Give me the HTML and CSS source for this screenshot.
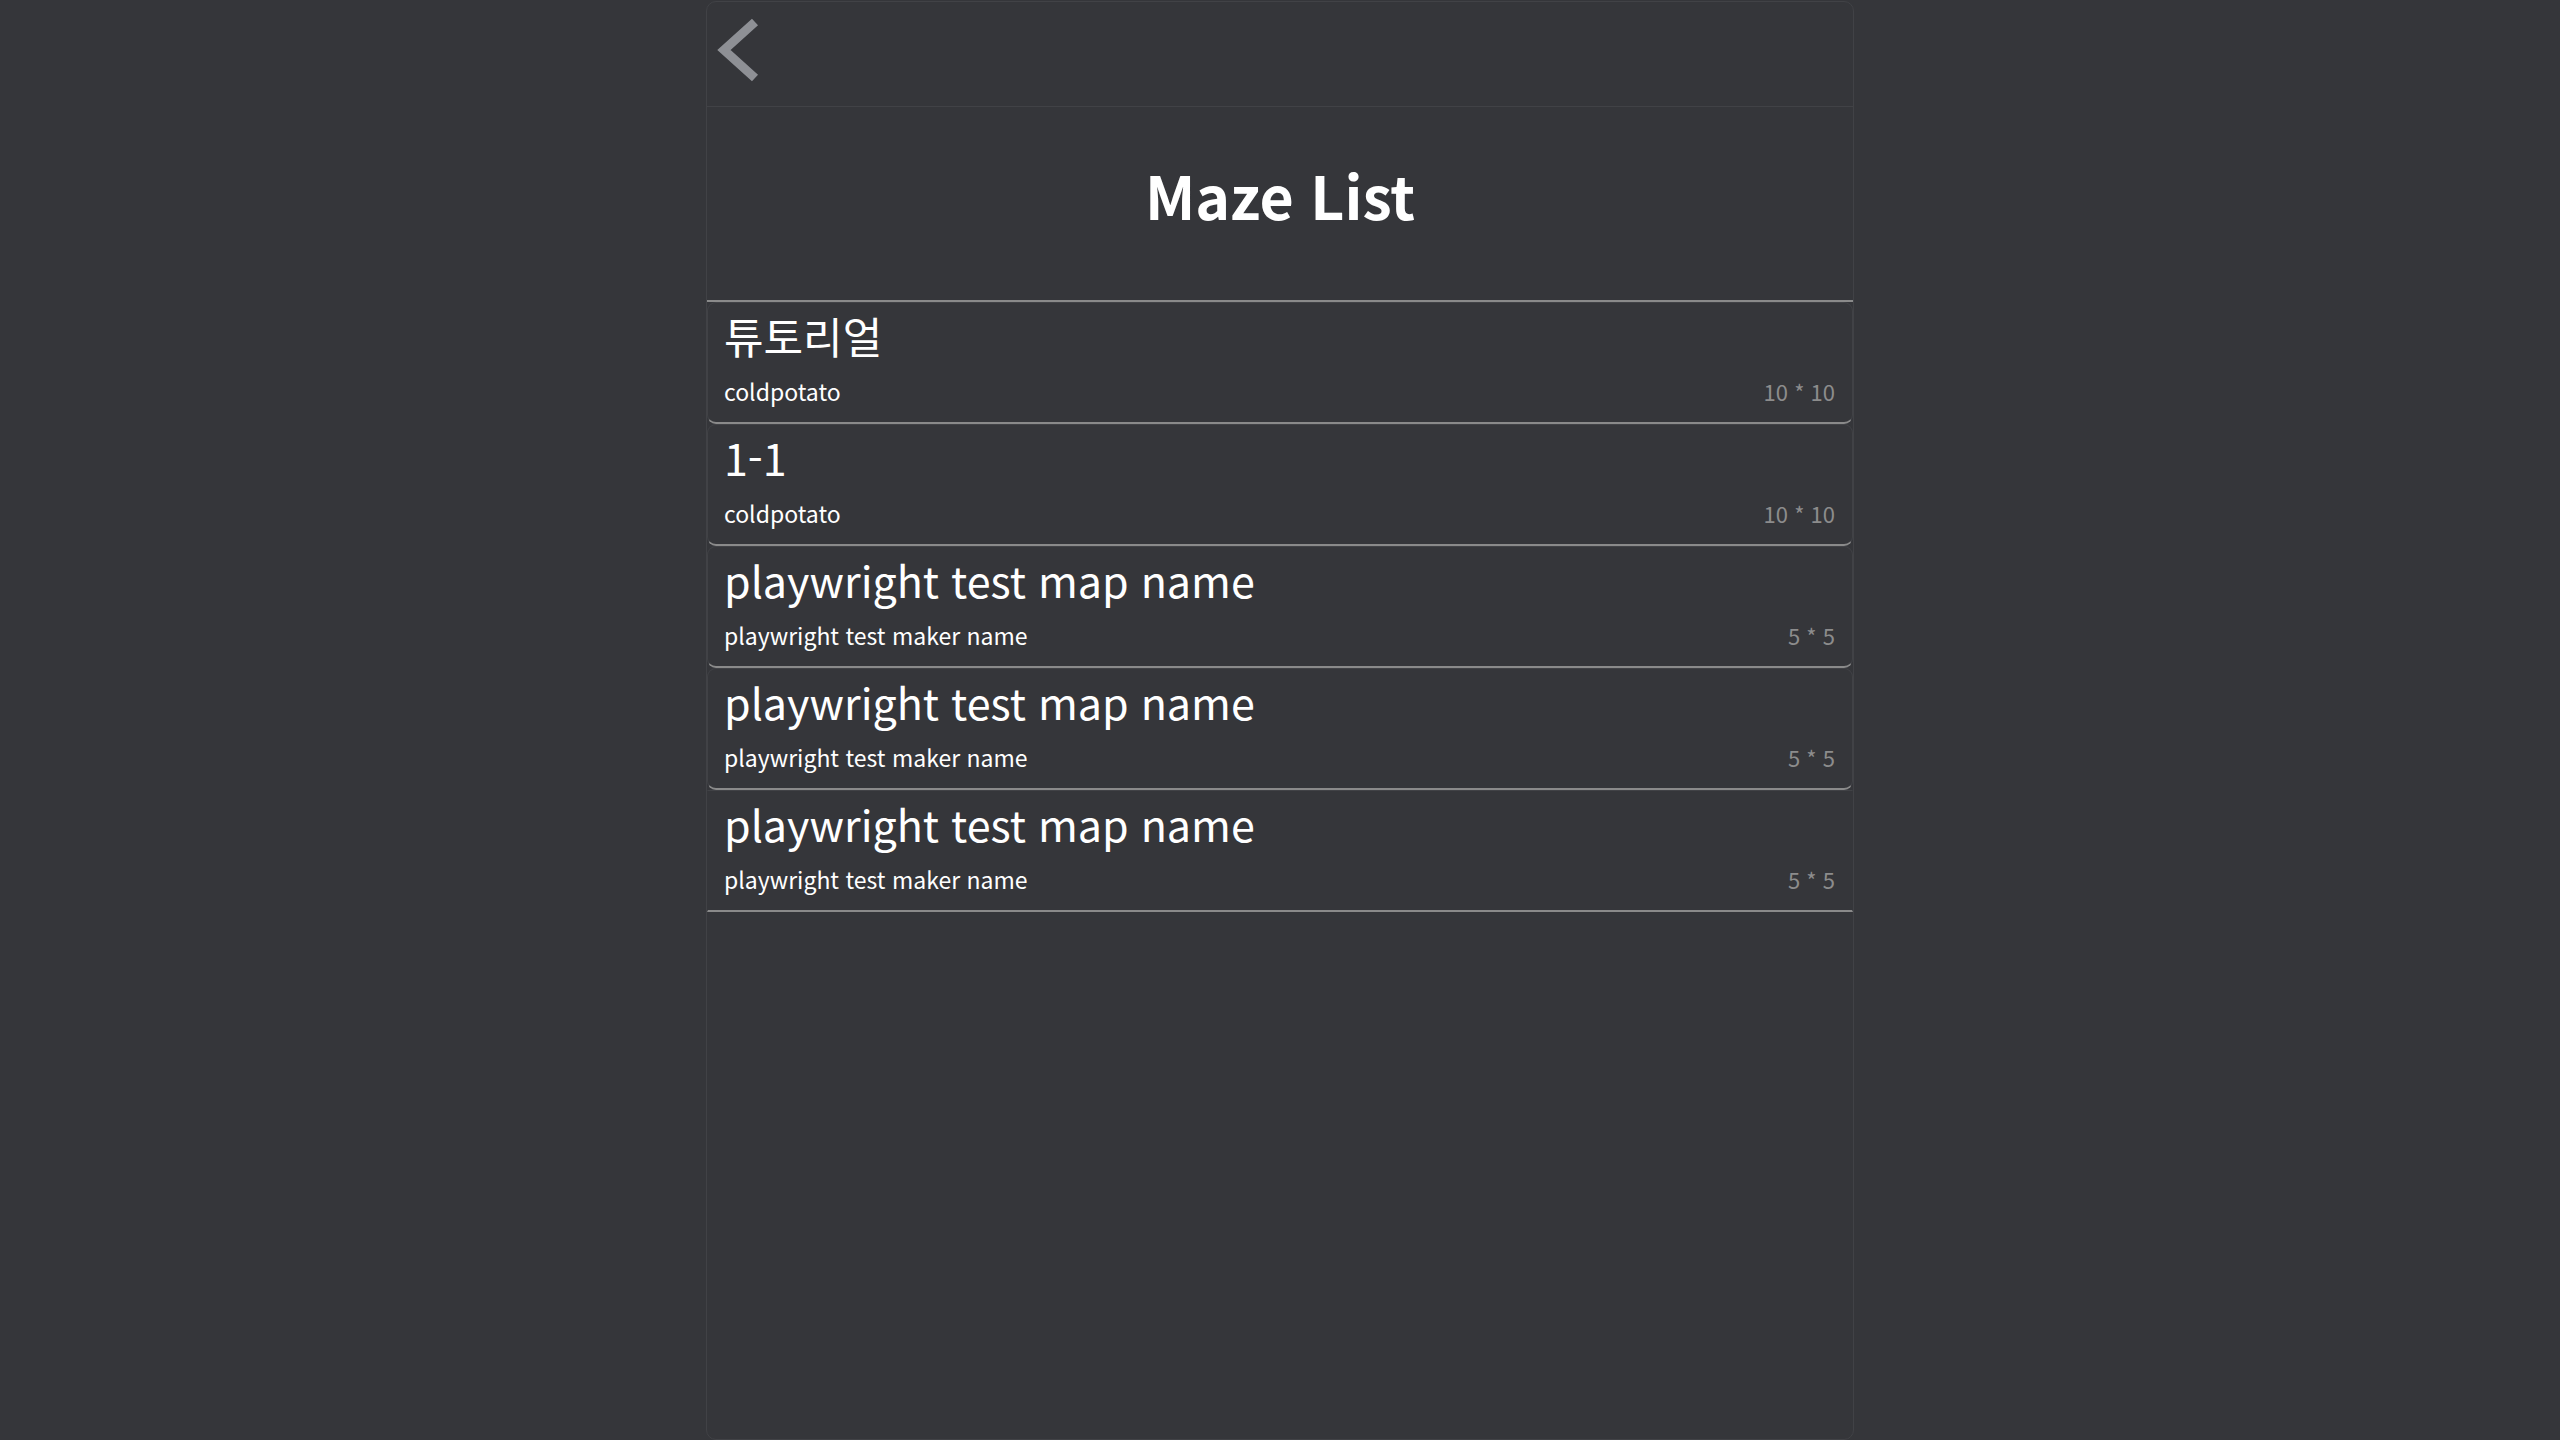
FILE: index.html
```html
<!DOCTYPE html>
<html lang="ko">
<head>
<meta charset="utf-8">
<title>Maze List</title>
<link rel="stylesheet" href="styles.css">
</head>
<body>
<div class="app">
  <header class="topbar">
    <button class="back" aria-label="back">
      <svg width="44" height="66" viewBox="0 0 44 66"><polyline points="39,6 8,34 39,62" fill="none" stroke="#8e9095" stroke-width="9" stroke-linejoin="miter" stroke-linecap="butt"/></svg>
    </button>
  </header>
  <section class="title-wrap">
    <h1 class="title">Maze List</h1>
  </section>
  <ul class="list">
    <li class="item">
      <div class="name">튜토리얼</div>
      <div class="meta"><span class="maker">coldpotato</span><span class="size">10 * 10</span></div>
    </li>
    <li class="item">
      <div class="name">1-1</div>
      <div class="meta"><span class="maker">coldpotato</span><span class="size">10 * 10</span></div>
    </li>
    <li class="item">
      <div class="name">playwright test map name</div>
      <div class="meta"><span class="maker">playwright test maker name</span><span class="size">5 * 5</span></div>
    </li>
    <li class="item">
      <div class="name">playwright test map name</div>
      <div class="meta"><span class="maker">playwright test maker name</span><span class="size">5 * 5</span></div>
    </li>
    <li class="item">
      <div class="name">playwright test map name</div>
      <div class="meta"><span class="maker">playwright test maker name</span><span class="size">5 * 5</span></div>
    </li>
  </ul>
</div>
</body>
</html>
```
FILE: styles.css
```css
html, body {
  margin: 0;
  padding: 0;
  background: #35363a;
  height: 100%;
}
body {
  font-family: "Noto Sans CJK KR", "Noto Sans", sans-serif;
  color: #ffffff;
  padding-top: 1px;
  box-sizing: border-box;
}
.app {
  width: 1148px;
  margin: 0 auto;
  box-sizing: border-box;
  min-height: calc(100vh - 1px);
  border: 1px solid #414246;
  border-radius: 10px;
  background: #35363a;
}
.topbar {
  border-bottom: 1px solid #414246;
  display: flex;
  align-items: flex-start;
  padding: 14px 0 0 9px;
  height: 90px;
}
.back {
  background: none;
  border: none;
  padding: 0;
  margin: 0;
  display: block;
  cursor: pointer;
}
.back svg { display: block; }
.title-wrap {
  border-bottom: 2px solid #8a8a8a;
  padding: 58px 0 76px;
  text-align: center;
}
.title {
  margin: 0;
  font-size: 59px;
  line-height: 59px;
  font-weight: 700;
}
.list {
  list-style: none;
  margin: 0;
  padding: 0;
}
.item {
  border: 1px solid #414246;
  border-bottom: 2px solid #8a8a8a;
  border-radius: 9px;
  padding: 0 17px 13px 16px;
}
.item:last-child {
  border-radius: 0;
  border-left-color: transparent;
  border-right-color: transparent;
}
.name {
  font-size: 43px;
  line-height: 64px;
}
.meta {
  margin-top: 6px;
  display: flex;
  justify-content: space-between;
  font-size: 23px;
  line-height: 36px;
}
.size {
  font-size: 22px;
  color: #8c8c8c;
}
```
